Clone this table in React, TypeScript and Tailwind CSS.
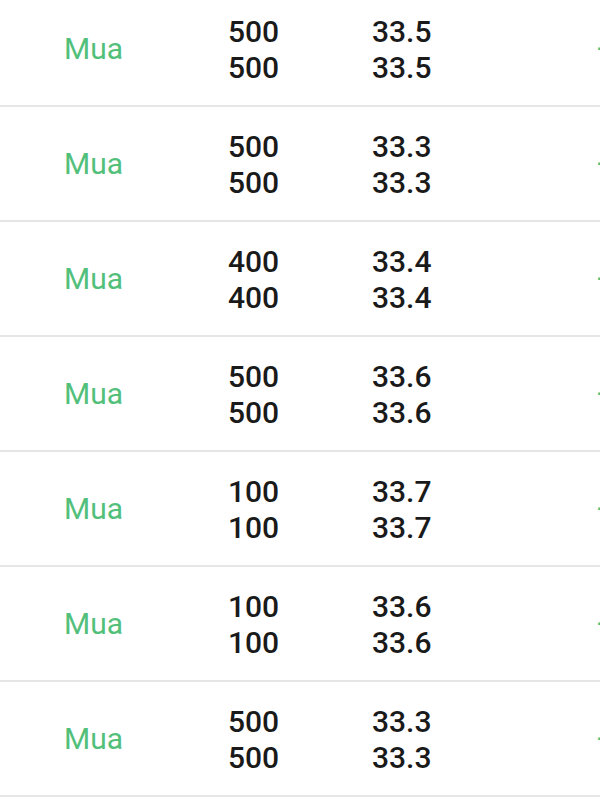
const orders = [
  { qty: 500, price: '33.5' },
  { qty: 500, price: '33.3' },
  { qty: 400, price: '33.4' },
  { qty: 500, price: '33.6' },
  { qty: 100, price: '33.7' },
  { qty: 100, price: '33.6' },
  { qty: 500, price: '33.3' },
];

const OrderRow = ({ qty, price }: { qty: number; price: string }) => (
  <div className="flex items-center h-[115px] border-b-2 border-[#e6e6e6]">
    <div className="w-[228px] pl-[64px] text-[30px] leading-[36px] text-[#52c07a]">Mua</div>
    <div className="w-[144px] pt-[2px] text-[30px] leading-[36px] font-medium text-[#1a1a1a]">
      <div>{qty}</div>
      <div>{qty}</div>
    </div>
    <div className="flex-1 pt-[2px] text-[30px] leading-[36px] font-medium text-[#1a1a1a]">
      <div>{price}</div>
      <div>{price}</div>
    </div>
    <div className="w-[3px] overflow-hidden whitespace-nowrap text-[30px] leading-[36px] text-[#52c07a]">+0.1</div>
  </div>
);

export default function App() {
  return (
    <div className="w-[600px] h-[800px] overflow-hidden bg-white font-['Roboto',sans-serif]">
      <div className="-mt-[8px]">
        {orders.map((o, i) => (
          <OrderRow key={i} qty={o.qty} price={o.price} />
        ))}
      </div>
    </div>
  );
}
